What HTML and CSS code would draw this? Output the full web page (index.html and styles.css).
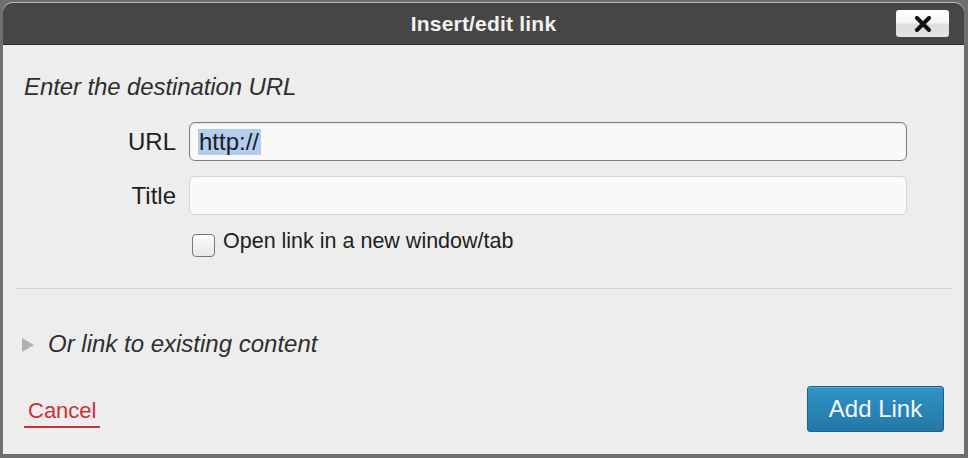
FILE: index.html
```html
<!DOCTYPE html>
<html>
<head>
<meta charset="utf-8">
<link rel="stylesheet" href="styles.css">
</head>
<body>
<div class="dialog">
  <div class="titlebar">
    <span class="title">Insert/edit link</span>
    <button class="close" type="button"><svg width="18" height="16" viewBox="0 0 18 16"><path d="M3 2 L15 14 M15 2 L3 14" stroke="#111" stroke-width="4" stroke-linecap="round"/></svg></button>
  </div>
  <div class="content">
    <p class="intro">Enter the destination URL</p>
    <div class="fields">
      <label class="lbl">URL</label>
      <div class="input url"><span class="sel">http://</span></div>
      <label class="lbl">Title</label>
      <div class="input title-in"></div>
      <div></div>
      <div class="check"><span class="box"></span><span>Open link in a new window/tab</span></div>
    </div>
    <div class="sep"></div>
    <div class="existing"><span class="tri"></span><span>Or link to existing content</span></div>
    <div class="footer">
      <a class="cancel">Cancel</a>
      <button class="add" type="button">Add Link</button>
    </div>
  </div>
</div>
</body>
</html>
```
FILE: styles.css
```css
* { box-sizing: border-box; }
html, body { margin: 0; padding: 0; }
body {
  background: #6e6e6e;
  width: 968px;
  height: 458px;
  overflow: hidden;
  font-family: "Liberation Sans", Arial, sans-serif;
}
.dialog {
  margin: 3px 4px 0 3px;
  height: 451px;
  background: #ededed;
  border-radius: 9px 9px 0 0;
  display: flex;
  flex-direction: column;
  box-shadow: 0 -1px 0 #b5b5b5;
}
.titlebar {
  position: relative;
  height: 42px;
  background: #464646;
  border-radius: 9px 9px 0 0;
  border-bottom: 1px solid #2c2c2c;
  display: flex;
  align-items: center;
  justify-content: center;
}
.title {
  color: #f2f2f2;
  font-weight: bold;
  font-size: 21px;
  letter-spacing: 0.2px;
}
.close {
  position: absolute;
  right: 15px;
  top: 7px;
  width: 53px;
  height: 27px;
  border: none;
  border-radius: 3px;
  background: linear-gradient(#ffffff 0%, #f7f7f7 45%, #dedede 55%, #e4e4e4 100%);
  display: flex;
  align-items: center;
  justify-content: center;
  padding: 0;
}
.content {
  flex: 1;
  display: flex;
  flex-direction: column;
  padding: 0 12px 0 13px;
}
.intro {
  margin: 28px 0 0 8px;
  font-size: 24px;
  font-style: italic;
  color: #2e2e2e;
  line-height: 28px;
  letter-spacing: -0.1px;
}
.fields {
  display: grid;
  grid-template-columns: 160px 718px;
  column-gap: 13px;
  row-gap: 15px;
  margin-top: 21px;
  align-items: center;
}
.lbl {
  text-align: right;
  font-size: 24px;
  color: #1e1e1e;
}
.input {
  height: 39px;
  border-radius: 6px;
  background: #f9f9f9;
  display: flex;
  align-items: center;
  padding-left: 8px;
  font-size: 24px;
  color: #1e1e1e;
}
.url { border: 1px solid #7d7d7d; box-shadow: inset 0 1px 2px rgba(0,0,0,0.08); }
.title-in { border: 1px solid #d4d4d4; }
.sel { background: #b3cdef; padding: 0 2px 0 1px; line-height: 26px; }
.check {
  display: flex;
  align-items: flex-start;
  gap: 8px;
  font-size: 21.5px;
  line-height: 22px;
  color: #1e1e1e;
  padding-left: 3px;
}
.box {
  width: 23px;
  height: 23px;
  border: 1px solid #777;
  border-radius: 4px;
  background: linear-gradient(#fdfdfd, #e6e6e6);
  margin-top: 4px;
  flex: none;
}
.sep {
  height: 1px;
  background: #d6d6d6;
  margin-top: 31px;
  width: 936px;
}
.existing {
  display: flex;
  align-items: center;
  margin-top: 41px;
  margin-left: 6px;
  font-size: 24px;
  line-height: 28px;
  font-style: italic;
  color: #2e2e2e;
}
.tri {
  width: 0;
  height: 0;
  border-top: 7px solid transparent;
  border-bottom: 7px solid transparent;
  border-left: 12px solid #b0b0b0;
  margin-right: 14px;
  margin-top: 2px;
}
.footer {
  display: flex;
  justify-content: space-between;
  align-items: center;
  margin-top: 28px;
  padding-right: 8px;
}
.cancel {
  color: #c8323a;
  font-size: 22px;
  line-height: 24px;
  margin-left: 8px;
  padding: 0 4px 3px 4px;
  border-bottom: 2px solid #c8323a;
  margin-top: 8px;
}
.add {
  width: 137px;
  height: 46px;
  border: 1px solid #1f5f82;
  border-radius: 3px;
  background: linear-gradient(#3192c6, #2378a8);
  color: #f4f8fb;
  font-family: "Liberation Sans", Arial, sans-serif;
  font-size: 24px;
  padding: 0;
  box-shadow: inset 0 1px 0 rgba(255,255,255,0.25);
}
```
